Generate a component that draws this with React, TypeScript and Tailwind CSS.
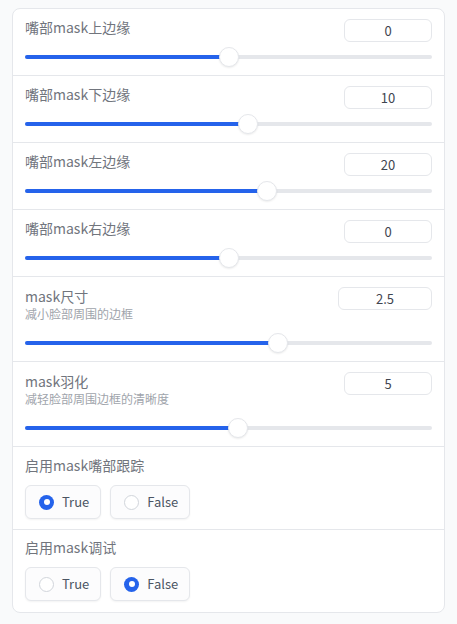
import React from "react"

type SliderRow = {
  label: string
  desc?: string
  value: string
  frac: number
  boxW: string
}

const sliders: SliderRow[] = [
  { label: "嘴部mask上边缘", value: "0", frac: 0.5, boxW: "w-[88px]" },
  { label: "嘴部mask下边缘", value: "10", frac: 0.55, boxW: "w-[88px]" },
  { label: "嘴部mask左边缘", value: "20", frac: 0.6, boxW: "w-[88px]" },
  { label: "嘴部mask右边缘", value: "0", frac: 0.5, boxW: "w-[88px]" },
  { label: "mask尺寸", desc: "减小脸部周围的边框", value: "2.5", frac: 0.628, boxW: "w-[94px]" },
  { label: "mask羽化", desc: "减轻脸部周围边框的清晰度", value: "5", frac: 0.525, boxW: "w-[88px]" },
]

function Slider({ frac }: { frac: number }) {
  // thumb travels inside the track with a 10px inset on each side
  const pos = `calc(10px + (100% - 20px) * ${frac})`
  return (
    <div className="relative h-5 w-full">
      <div className="absolute left-0 right-0 top-[8px] h-[4px] rounded-full bg-[#e5e7eb]" />
      <div className="absolute left-0 top-[8px] h-[4px] rounded-full bg-[#2563eb]" style={{ width: pos }} />
      <div
        className="absolute top-0 h-5 w-5 -translate-x-1/2 rounded-full border border-[#e5e7eb] bg-white shadow-[0_1px_2px_rgba(0,0,0,0.08)]"
        style={{ left: pos }}
      />
    </div>
  )
}

function Radio({ label, checked }: { label: string; checked: boolean }) {
  return (
    <div className="flex h-[34px] items-center gap-[8px] rounded-[6px] border border-[#e5e7eb] bg-[#fcfcfd] pl-[13px] pr-[11px] shadow-[0_1px_2px_rgba(0,0,0,0.05)]">
      {checked ? (
        <span className="flex h-[15px] w-[15px] items-center justify-center rounded-full bg-[#2563eb]">
          <span className="h-[6px] w-[6px] rounded-full bg-white" />
        </span>
      ) : (
        <span className="h-[15px] w-[15px] rounded-full border border-[#d1d5db] bg-white" />
      )}
      <span className="text-[13px] text-[#4b5563]">{label}</span>
    </div>
  )
}

export default function App() {
  return (
    <div
      className="min-h-[624px] w-[457px] bg-[#f9fafb] px-[12px] pt-[8px]"
      style={{ fontFamily: '"Noto Sans CJK SC", "Noto Sans", sans-serif' }}
    >
      <div className="overflow-hidden rounded-[8px] border border-[#e5e7eb] bg-white">
        {sliders.map((s) => (
          <div key={s.label} className="border-b border-[#e5e7eb] px-[12px] pb-[8px] pt-[10px]">
            <div className="flex items-start justify-between">
              <div className="flex flex-col">
                <span className={`text-[14px] text-[#71757d] ${s.desc ? "leading-[18px]" : "leading-[17px]"}`}>{s.label}</span>
                {s.desc && <span className="text-[12px] leading-[18px] text-[#a0a4ab]">{s.desc}</span>}
              </div>
              <div
                className={`flex h-[23px] ${s.boxW} items-center justify-center rounded-[6px] border border-[#e5e7eb] bg-white text-[13px] text-[#3f4550]`}
              >
                {s.value}
              </div>
            </div>
            <div className={s.desc ? "mt-[10px]" : "mt-[5px]"}>
              <Slider frac={s.frac} />
            </div>
          </div>
        ))}

        <div className="border-b border-[#e5e7eb] px-[12px] pb-[10px] pt-[9px]">
          <div className="text-[14px] leading-[18px] text-[#71757d]">启用mask嘴部跟踪</div>
          <div className="mt-[11px] flex gap-[9px]">
            <Radio label="True" checked />
            <Radio label="False" checked={false} />
          </div>
        </div>

        <div className="px-[12px] pb-[11px] pt-[8px]">
          <div className="text-[14px] leading-[18px] text-[#71757d]">启用mask调试</div>
          <div className="mt-[11px] flex gap-[9px]">
            <Radio label="True" checked={false} />
            <Radio label="False" checked />
          </div>
        </div>
      </div>
    </div>
  )
}
